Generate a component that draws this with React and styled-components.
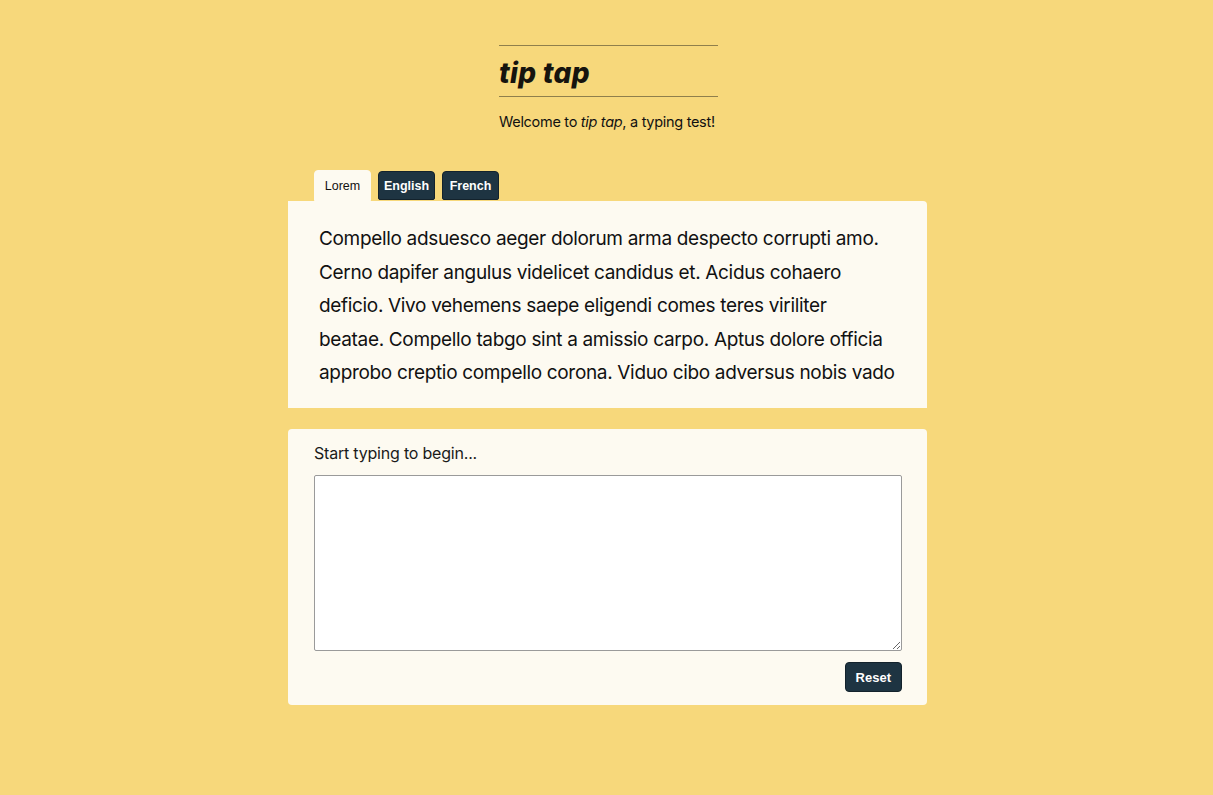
import styled, { createGlobalStyle } from 'styled-components';

const GlobalStyle = createGlobalStyle`
  html, body {
    margin: 0;
    background: #f7d87b;
  }
  body {
    font-family: Inter, 'Noto Sans', sans-serif;
    color: #111;
  }
`;

const Page = styled.main`
  display: flex;
  flex-direction: column;
  align-items: center;
  padding-top: 45px;
  min-height: 795px;
  box-sizing: border-box;
`;

const Header = styled.header`
  width: 219px;
  display: flex;
  flex-direction: column;
  margin-left: 4px;
`;

const Rule = styled.hr`
  margin: 0;
  border: 0;
  border-top: 1px solid #8f7f4c;
  width: 100%;
`;

const Title = styled.h1`
  margin: 0;
  height: 50px;
  padding-top: 3px;
  box-sizing: border-box;
  display: flex;
  align-items: center;
  font-size: 28px;
  font-weight: 800;
  font-style: italic;
  letter-spacing: 0.3px;
  color: #16140e;
`;

const Welcome = styled.p`
  margin: 16px 0 0;
  font-size: 14.5px;
  line-height: 18px;
  white-space: nowrap;
  letter-spacing: -0.3px;
`;

const Main = styled.section`
  width: 639px;
  margin: 39px 0 0 2px;
`;

const Tabs = styled.div`
  display: flex;
  align-items: flex-end;
  gap: 7px;
  padding-left: 26px;
  height: 31px;
`;

const Tab = styled.button`
  font-family: 'Liberation Sans', Arial, sans-serif;
  font-size: 12.5px;
  height: ${(p) => (p.$active ? '31px' : '29px')};
  margin-bottom: ${(p) => (p.$active ? '0' : '1px')};
  padding: 0 3px;
  width: 57px;
  border-radius: 4px 4px ${(p) => (p.$active ? '0 0' : '2px 2px')};
  border: 1px solid ${(p) => (p.$active ? '#fdfaf1' : '#13222c')};
  background: ${(p) => (p.$active ? '#fdfaf1' : '#1e3442')};
  color: ${(p) => (p.$active ? '#111' : '#fff')};
  font-weight: ${(p) => (p.$active ? 'normal' : 'bold')};
  cursor: pointer;
`;

const Passage = styled.div`
  background: #fdfaf1;
  padding: 21px 22px 18px 31px;
  border-radius: 0 4px 0 0;
`;

const PassageWindow = styled.div`
  height: 168px;
  overflow: hidden;
  font-size: 19px;
  line-height: 33.5px;
  letter-spacing: -0.33px;
  color: #111;
`;

const PassageLine = styled.div`
  white-space: nowrap;
`;

const InputCard = styled.div`
  margin-top: 21px;
  background: #fdfaf1;
  border-radius: 4px;
  padding: 14px 25px 13px 26px;
  display: flex;
  flex-direction: column;
`;

const Prompt = styled.label`
  font-size: 16px;
  line-height: 20px;
  letter-spacing: -0.2px;
  color: #1a1a1a;
`;

const TypingArea = styled.textarea`
  margin-top: 12px;
  height: 176px;
  box-sizing: border-box;
  border: 1px solid #9a9a9a;
  border-radius: 2px;
  background: #fff;
  resize: vertical;
  font: inherit;
`;

const Footer = styled.div`
  display: flex;
  justify-content: flex-end;
  margin-top: 11px;
`;

const ResetButton = styled.button`
  font-family: 'Liberation Sans', Arial, sans-serif;
  font-weight: bold;
  font-size: 13px;
  height: 30px;
  padding: 0 10px;
  border-radius: 4px;
  border: 1px solid #13222c;
  background: #1e3442;
  color: #fff;
  cursor: pointer;
`;

const lines = [
  'Compello adsuesco aeger dolorum arma despecto corrupti amo.',
  'Cerno dapifer angulus videlicet candidus et. Acidus cohaero',
  'deficio. Vivo vehemens saepe eligendi comes teres viriliter',
  'beatae. Compello tabgo sint a amissio carpo. Aptus dolore officia',
  'approbo creptio compello corona. Viduo cibo adversus nobis vado',
  'tollo. Sordeo textor clamo tenus cado.',
];

export default function App() {
  return (
    <>
      <GlobalStyle />
      <Page>
        <Header>
          <Rule />
          <Title>tip tap</Title>
          <Rule />
          <Welcome>
            Welcome to <em>tip tap</em>, a typing test!
          </Welcome>
        </Header>
        <Main>
          <Tabs>
            <Tab $active>Lorem</Tab>
            <Tab>English</Tab>
            <Tab>French</Tab>
          </Tabs>
          <Passage>
            <PassageWindow>
              {lines.map((line) => (
                <PassageLine key={line}>{line}</PassageLine>
              ))}
            </PassageWindow>
          </Passage>
          <InputCard>
            <Prompt htmlFor="typing">Start typing to begin...</Prompt>
            <TypingArea id="typing" />
            <Footer>
              <ResetButton>Reset</ResetButton>
            </Footer>
          </InputCard>
        </Main>
      </Page>
    </>
  );
}
